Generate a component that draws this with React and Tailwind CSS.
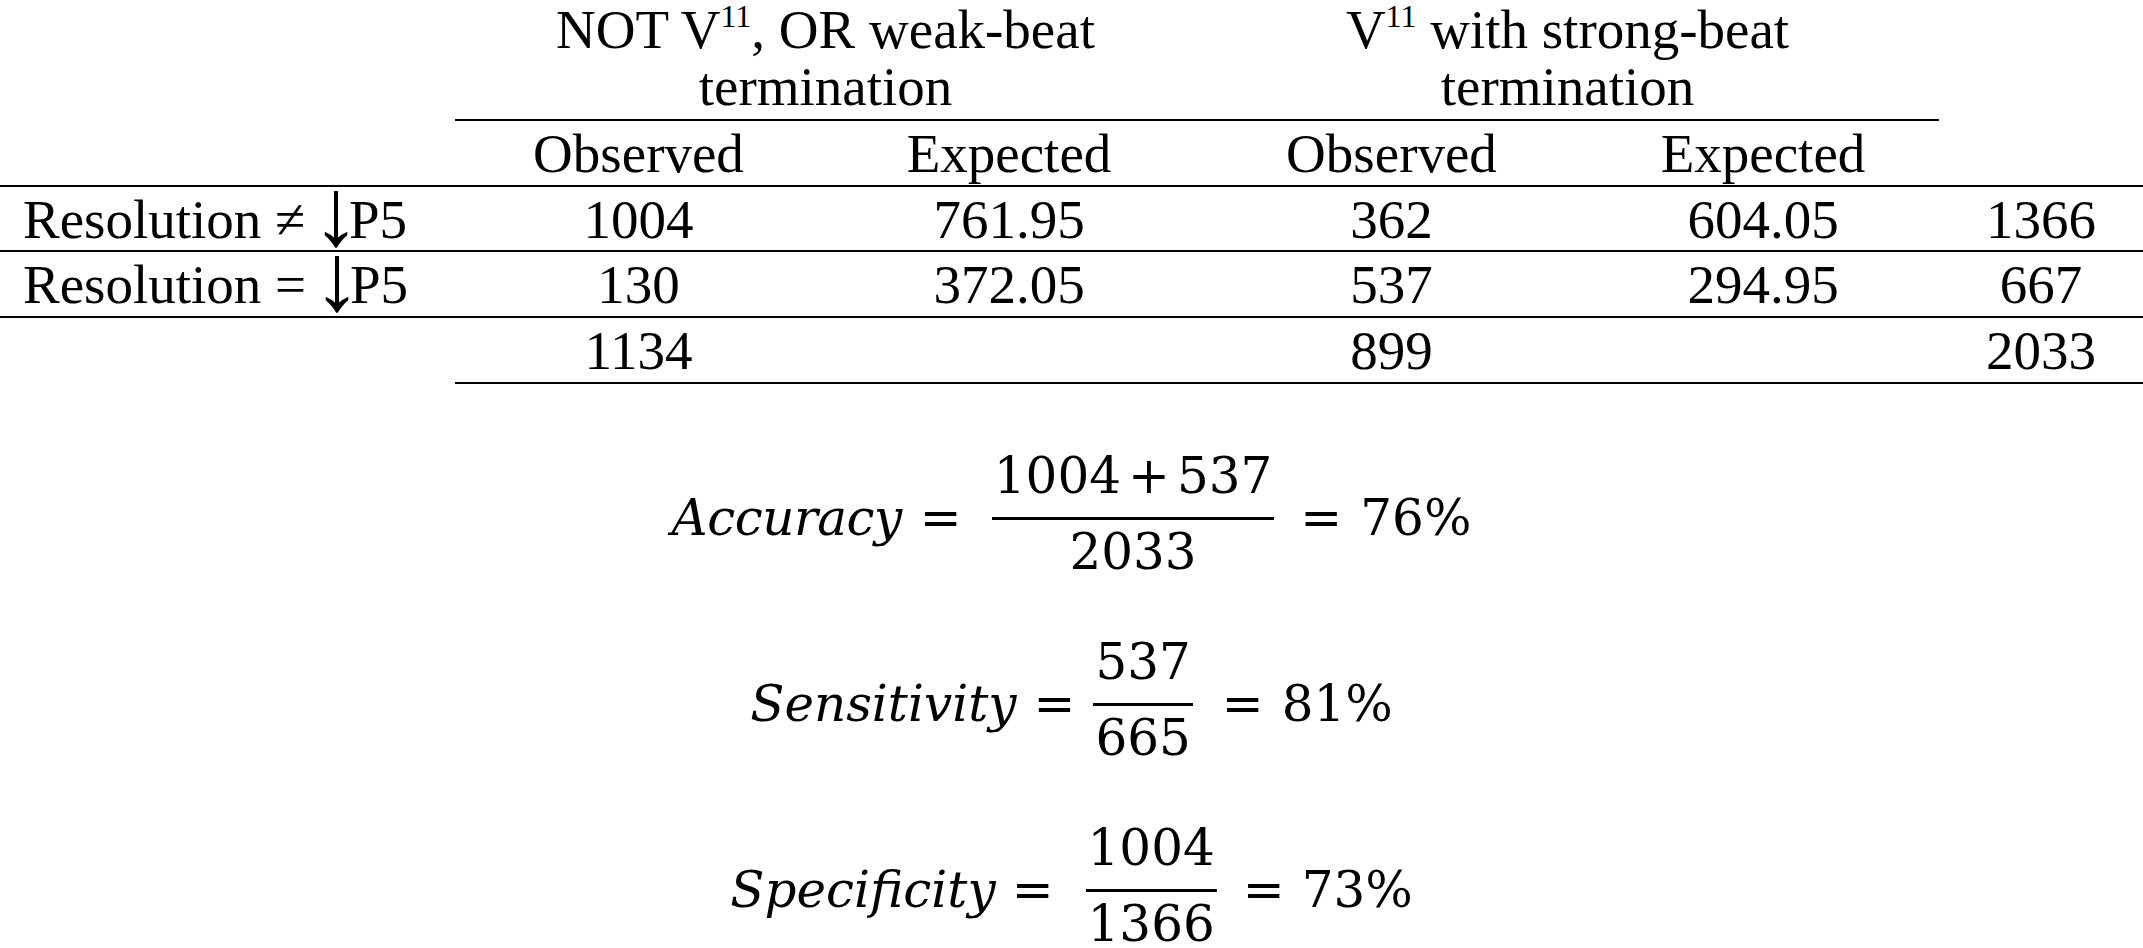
import React from "react";

function Sup() {
  return <span className="text-[32px] leading-none align-[21px]">11</span>;
}

function Arrow() {
  return <span className="text-[96px] leading-[0px] align-[-7px] -ml-[7px] -mr-[11px]">↓</span>;
}

function Eq({ cls }) {
  return <span className={cls}>=</span>;
}

export default function App() {
  const cell = "h-[66px] border-b-2 border-black text-center leading-[65px]";
  const cellC = "h-[65px] border-b-2 border-black text-center leading-[65px]";
  return (
    <div className="w-[2143px] min-h-[948px] overflow-hidden bg-white text-black">
      <div className="grid grid-cols-[455px_367px_374px_391px_352px_204px] font-['Liberation_Serif',serif] text-[55px]">
        {/* Row A */}
        <div className="h-[121px]" />
        <div className="col-span-2 h-[121px] border-b-2 border-black flex flex-col items-center">
          <div className="text-center whitespace-nowrap">
            <div className="leading-[51px]">NOT V<Sup />, OR weak-beat</div>
            <div className="leading-[63px]">termination</div>
          </div>
        </div>
        <div className="col-span-2 h-[121px] border-b-2 border-black flex flex-col items-center">
          <div className="text-center whitespace-nowrap">
            <div className="leading-[51px]">V<Sup /> with strong-beat</div>
            <div className="leading-[63px]">termination</div>
          </div>
        </div>
        <div className="h-[121px]" />

        {/* Row B */}
        <div className={cell} />
        <div className={cell}>Observed</div>
        <div className={cell}>Expected</div>
        <div className={cell}>Observed</div>
        <div className={cell}>Expected</div>
        <div className={cell} />

        {/* Row C */}
        <div className="h-[65px] border-b-2 border-black text-left leading-[65px] pl-[23px] whitespace-nowrap">
          Resolution ≠ <Arrow />P5
        </div>
        <div className={cellC}>1004</div>
        <div className={cellC}>761.95</div>
        <div className={cellC}>362</div>
        <div className={cellC}>604.05</div>
        <div className={cellC}>1366</div>

        {/* Row D */}
        <div className="h-[66px] border-b-2 border-black text-left leading-[65px] pl-[23px] whitespace-nowrap">
          Resolution = <Arrow />P5
        </div>
        <div className={cell}>130</div>
        <div className={cell}>372.05</div>
        <div className={cell}>537</div>
        <div className={cell}>294.95</div>
        <div className={cell}>667</div>

        {/* Row E */}
        <div className="h-[66px]" />
        <div className={cell}>1134</div>
        <div className={cell}></div>
        <div className={cell}>899</div>
        <div className={cell}></div>
        <div className={cell}>2033</div>
      </div>

      <div className="mt-[67px] flex flex-col items-center gap-[60px] font-['DejaVu_Serif',serif] text-[50px] whitespace-nowrap">
        {/* Accuracy */}
        <div className="flex items-start">
          <span className="mt-[42px] leading-[50px] italic tracking-[-0.5px]">Accuracy</span>
          <Eq cls="mt-[42px] leading-[50px] ml-[18px]" />
          <div className="ml-[30px] flex flex-col items-center">
            <div className="leading-[50px] mb-[16px] px-[2px]">
              1004<span className="mx-[7px]">+</span>537
            </div>
            <div className="h-[3px] w-full bg-black" />
            <div className="leading-[50px] mt-[7px]">2033</div>
          </div>
          <Eq cls="mt-[42px] leading-[50px] ml-[26px]" />
          <span className="mt-[42px] leading-[50px] ml-[18px]">76%</span>
        </div>

        {/* Sensitivity */}
        <div className="flex items-start">
          <span className="mt-[42px] leading-[50px] italic">Sensitivity</span>
          <Eq cls="mt-[42px] leading-[50px] ml-[17px]" />
          <div className="ml-[18px] flex flex-col items-center">
            <div className="leading-[50px] mb-[16px] px-[2px]">537</div>
            <div className="h-[3px] w-full bg-black" />
            <div className="leading-[50px] mt-[7px]">665</div>
          </div>
          <Eq cls="mt-[42px] leading-[50px] ml-[29px]" />
          <span className="mt-[42px] leading-[50px] ml-[18px]">81%</span>
        </div>

        {/* Specificity */}
        <div className="flex items-start">
          <span className="mt-[42px] leading-[50px] italic">Specificity</span>
          <Eq cls="mt-[42px] leading-[50px] ml-[16px]" />
          <div className="ml-[32px] flex flex-col items-center">
            <div className="leading-[50px] mb-[16px] px-[2px]">1004</div>
            <div className="h-[3px] w-full bg-black" />
            <div className="leading-[50px] mt-[7px]">1366</div>
          </div>
          <Eq cls="mt-[42px] leading-[50px] ml-[26px]" />
          <span className="mt-[42px] leading-[50px] ml-[17px]">73%</span>
        </div>
      </div>
    </div>
  );
}
